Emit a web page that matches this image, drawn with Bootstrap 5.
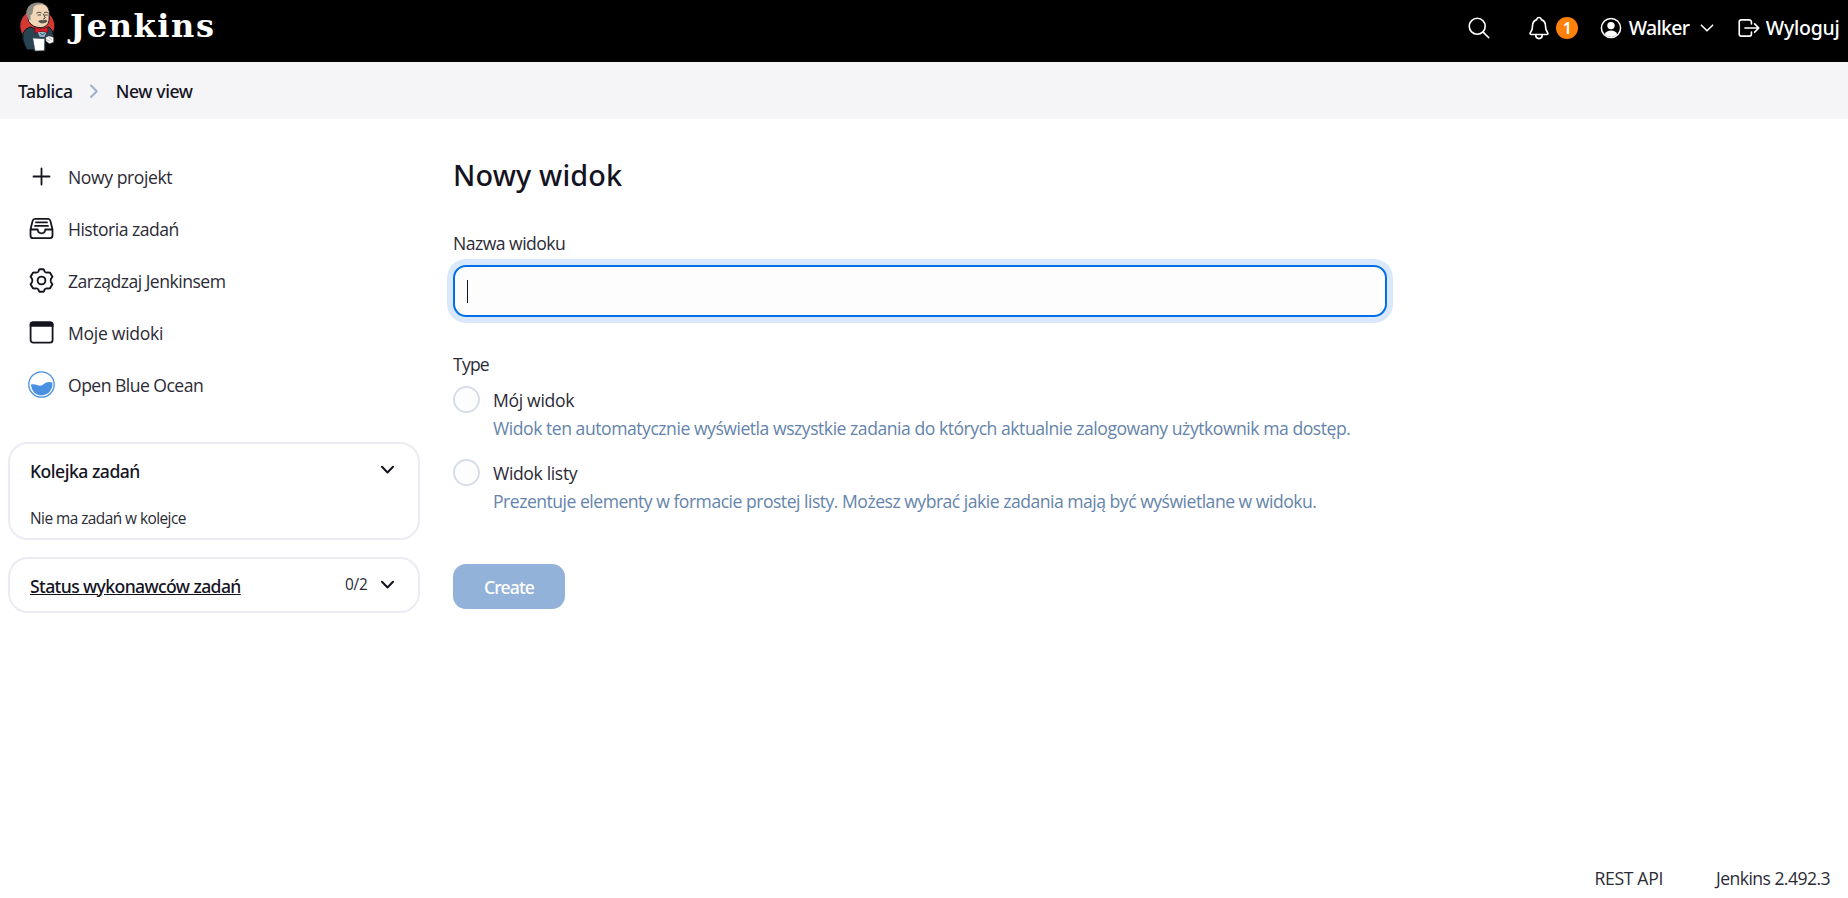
<!DOCTYPE html>
<html lang="pl">
<head>
<meta charset="utf-8">
<meta name="viewport" content="width=device-width, initial-scale=1">
<title>New view - Jenkins</title>
<link rel="stylesheet" href="https://cdn.jsdelivr.net/npm/bootstrap@5.3.0/dist/css/bootstrap.min.css">
<style>
body{font-family:"Open Sans","Noto Sans",sans-serif;font-size:17.6px;line-height:26px;color:#14141f;background:#fff;height:898px;overflow:hidden;letter-spacing:-.5px}
a{color:inherit;text-decoration:none}
svg{display:block;flex:none}
.side-item span,.pane small,.content label,.type-label,footer a{color:#2b2b36}
.ln{fill:none;stroke:currentColor;stroke-linecap:round;stroke-linejoin:round}
.topbar{height:62px;background:#000;color:#fff;padding:0 8.5px 7px 10px}
.topbar .nav-text{font:500 19.5px/28px "Noto Sans",sans-serif;padding-top:1px}
.mascot{margin-bottom:-7px}
.wordmark{font:700 32px/40px "DejaVu Serif",serif;letter-spacing:1.6px;margin-top:-3px}
.alert-count{width:22px;height:22px;background:#ff800a;font:600 16px/22px "Noto Sans",sans-serif;margin-left:4.5px;letter-spacing:0}
.bell{margin-left:34px}
.user-icon{margin:0 6.5px 0 22px}
.exit-icon{margin-left:10.5px}
.crumbs{height:57px;background:#f5f5f8;padding-left:18px;font-family:"Noto Sans",sans-serif;font-weight:500}
.crumb-sep{margin:0 15.5px;color:#9bb1cc}
.sidebar{width:411.5px;margin-left:8px;padding-top:31.5px}
.side-item{height:52px;padding-left:20px}
.side-icon{width:27px;margin-right:13px}
.pane{border:2px solid #ebebf3;border-radius:20px;padding:0 23.5px 0 20px}
.pane-title{font:500 17.6px/26px "Noto Sans",sans-serif;padding-top:1px}
.pane small{font-size:15.4px}
.queue{height:98px;margin-top:31.5px}
.queue-head{height:52px}
.queue small{margin-top:9.5px}
.executors{height:56px;margin-top:17px}
.executors svg{margin-left:13.5px}
.content{margin-left:33.5px;padding-top:38px;width:934px}
h1{font:500 28.8px/36px "Noto Sans",sans-serif;letter-spacing:.15px}
.name-label{margin-top:37px}
.name-field{height:52px;border:2px solid #006fe6;border-radius:13px;background:#fdfdfd;box-shadow:0 0 0 6px #d9e9fb;padding-left:12px;margin-top:9px}
.caret{width:1px;height:23px;background:#14141f;margin-top:1px}
.type-label{margin:34px 0 9px}
.choice{height:73px}
.choice label{margin-top:1px}
.choice .form-check-input{width:27px;height:27px;margin:.4px 13px 0 0;border:2px solid #d7dde8;background:#fdfdfd;float:none;flex:none}
.choice .form-text{margin:2px 0 0;font-size:17.6px;line-height:26px;color:#6484ab;white-space:nowrap}
.btn-create{width:112px;height:45px;border:0;border-radius:13px;font:500 17.6px/26px "Noto Sans",sans-serif;margin-top:32px;padding:0}
.btn-create:disabled{background:#92b2d9;color:#fff;opacity:1}
footer{height:38px;padding-right:18px;gap:53px;margin-bottom:1px}
.t1{letter-spacing:-.42px}.t2{letter-spacing:-.4px}.t3{letter-spacing:-.7px}.t4{letter-spacing:-.25px}
.s1{letter-spacing:-.43px}.s2{letter-spacing:-.52px}.s4{letter-spacing:-.3px}.s5{letter-spacing:-.54px}
.p1{letter-spacing:-.5px}.p2{letter-spacing:-.62px}.p3{letter-spacing:-.25px}
.f1{letter-spacing:-.53px}.f2{letter-spacing:-.8px}.f3{letter-spacing:-.33px}.f4{letter-spacing:-.36px}
.f5{letter-spacing:-.475px}.f6{letter-spacing:-.505px}.f7{letter-spacing:-.85px}.f8{letter-spacing:-.32px}.f9{letter-spacing:-.56px}
</style>
</head>
<body class="d-flex flex-column">
<header class="topbar d-flex align-items-center justify-content-between">
  <a href="#" class="d-flex align-items-center">
    <svg class="mascot" width="60" height="62" viewBox="0 0 180 186">
      <ellipse cx="82" cy="78" rx="51" ry="50" fill="#d33833"/>
      <path d="M39 100q5-14 22-19l30 12 24-12q12 4 15 24l1 20-15 4-8-12-3 34-54-2-8-16q-7-18-4-33z" fill="#2a4353" stroke="#0b1418" stroke-width="3"/>
      <path d="M52 46Q49 14 80 9q34-2 38 26l-1 27q-4 19-24 21-26 0-37-19z" fill="#f0d6b7" stroke="#222" stroke-width="3"/>
      <path d="M49 44Q47 17 72 9q18-4 33 4-25-2-34 7l-4 22-6 4 1 14-8-2z" fill="#8d8b84"/>
      <path d="M80 39q6-5 13-1m10 0q6-4 11 0M84 45h8m12 0h8m-12-3 6 12-6 3" class="ln" style="color:#55493d" stroke-width="3"/>
      <path d="M84 64q9-6 15-3 8-4 14 2-6 8-14 7-8 2-15-6z" fill="#595650"/>
      <path d="M75 81l14 7 4-4 4 3 16-6 1 17-17-4-6 1-16 5z" fill="#e01b24" stroke="#5a1015" stroke-width="2"/>
      <path d="M83 97l16-2 10 3-6 13-14-1z" fill="#9bb5c7"/>
      <path d="M91 99l5 6 8-5" fill="none" stroke="#31556b" stroke-width="3"/>
      <path d="M68 114l36 2-1 36-28 1z" fill="#fff" stroke="#36434a" stroke-width="2"/>
      <path d="M107 112l10-5 14 5v15l-13 4-10-7z" fill="#fff" stroke="#333" stroke-width="2"/>
      <path d="M116 112l9 7m-14 0 8 4" fill="none" stroke="#777" stroke-width="2"/>
    </svg>
    <span class="wordmark">Jenkins</span>
  </a>
  <nav class="d-flex align-items-center">
    <svg class="ln" width="26" height="26" viewBox="0 0 512 512" stroke-width="32"><path d="M221.09 64a157.09 157.09 0 10157.09 157.09A157.1 157.1 0 00221.09 64zM338.29 338.29L448 448"/></svg>
    <svg class="ln bell" width="26" height="26" viewBox="0 0 512 512" stroke-width="32"><path d="M427.68 351.43C402 320 383.87 304 383.87 217.35 383.87 138 343.35 109.73 310 96c-4.43-1.82-8.6-6-9.95-10.55C294.2 65.54 277.8 48 256 48s-38.21 17.55-44 37.47c-1.35 4.6-5.52 8.71-9.95 10.53-33.39 13.75-73.87 41.92-73.87 121.35C128.13 304 110 320 84.32 351.43 73.68 364.45 83 384 101.61 384h308.88c18.51 0 27.77-19.61 17.19-32.57zM320 384v16a64 64 0 01-128 0v-16"/></svg>
    <span class="alert-count rounded-circle text-center">1</span>
    <svg class="user-icon" width="22" height="22" viewBox="0 0 22 22"><circle cx="11" cy="11" r="9.600" fill="none" stroke="#fff" stroke-width="1.500"/><circle cx="11" cy="8.600" r="3.700" fill="#fff"/><path d="M4.700 17.200q1.700-3.700 6.300-3.700t6.300 3.700Q15 20 11 20t-6.300-2.800z" fill="#fff"/></svg>
    <span class="nav-text t3">Walker</span>
    <svg class="ln mx-2" width="20" height="20" viewBox="0 0 512 512" stroke-width="40"><path d="M112 184l144 144 144-144"/></svg>
    <svg class="ln exit-icon" width="26" height="26" viewBox="0 0 512 512" stroke-width="32"><path d="M304 336v40a40 40 0 01-40 40H104a40 40 0 01-40-40V136a40 40 0 0140-40h152c22.09 0 48 17.91 48 40v40M368 336l80-80-80-80M176 256h256"/></svg>
    <span class="nav-text t4 ms-1">Wyloguj</span>
  </nav>
</header>

<div class="crumbs d-flex align-items-center">
  <a href="#" class="t1">Tablica</a>
  <svg class="ln crumb-sep" width="12" height="16" viewBox="0 0 12 16" stroke-width="2"><path d="M3 2.500L8.800 8.200 3 14"/></svg>
  <a href="#" class="t2">New view</a>
</div>

<div class="d-flex flex-grow-1">
  <aside class="sidebar">
    <a href="#" class="side-item d-flex align-items-center">
      <svg class="side-icon ln" height="27" viewBox="0 0 27 27" stroke-width="1.800"><path d="M13.500 5.500v16M5.500 13.500h16"/></svg><span class="s1">Nowy projekt</span></a>
    <a href="#" class="side-item d-flex align-items-center">
      <svg class="side-icon ln" height="27" viewBox="0 0 27 27" stroke-width="1.800"><path d="M2.500 14.500L4.600 5.900Q5.100 3.900 7 3.900h13q1.900 0 2.400 2l2.100 8.600v6.100q0 2.600-2.600 2.600H5.100q-2.600 0-2.600-2.600zM2.500 14.500h7.200q.4 3.800 3.800 3.800t3.800-3.800h7.200M8 7.400h11M7 10.900h13"/></svg><span class="s2">Historia zadań</span></a>
    <a href="#" class="side-item d-flex align-items-center">
      <svg class="side-icon ln" height="27" viewBox="-13.500 -13.500 27 27" stroke-width="1.900"><path d="M-2-11.300H2Q2.500-11.300 3-9.200Q3.800-7.600 6.120-8L8.530-7.830L10.930-3.770L9.520-1.800Q8.600 0 9.520 1.800L10.930 3.770L8.530 7.830L6.120 8Q3.800 7.600 3 9.200Q2.500 11.300 2 11.300H-2Q-2.500 11.300-3 9.200Q-3.800 7.600-6.120 8L-8.530 7.830L-10.930 3.770L-9.520 1.800Q-8.600 0-9.520-1.800L-10.930-3.770L-8.530-7.830L-6.120-8Q-3.800-7.600-3-9.200Q-2.500-11.300-2-11.300z"/><circle r="3.900"/></svg><span class="s2">Zarządzaj Jenkinsem</span></a>
    <a href="#" class="side-item d-flex align-items-center">
      <svg class="side-icon" height="27" viewBox="0 0 27 27"><rect x="2.600" y="3.400" width="22" height="20.200" rx="2.600" class="ln" stroke-width="1.800"/><path d="M1.700 7.800V5.500q0-3 3-3h17.800q3 0 3 3v2.300z" fill="currentColor"/></svg><span class="s4">Moje widoki</span></a>
    <a href="#" class="side-item d-flex align-items-center">
      <svg class="side-icon" height="27" viewBox="0 0 27 27"><circle cx="13.500" cy="13.500" r="12.700" fill="none" stroke="#4a90e2" stroke-width="1.300"/><path d="M2.800 13.600q3.400-.8 7 .7 3 1.100 5.300-.9 4.200-3.400 9.200-1.800a11 11 0 0 1-10.800 12.800Q4.200 24.200 2.800 13.600z" fill="#4a90e2"/></svg><span class="s5">Open Blue Ocean</span></a>

    <section class="pane queue">
      <div class="queue-head d-flex align-items-center justify-content-between">
        <span class="pane-title p1">Kolejka zadań</span>
        <svg class="ln" width="13" height="10" viewBox="0 0 13 10" stroke-width="2"><path d="M1 1.800l5.500 5.700L12 1.800"/></svg>
      </div>
      <small class="d-block s5">Nie ma zadań w kolejce</small>
    </section>
    <section class="pane executors d-flex align-items-center justify-content-between">
      <a href="#" class="pane-title p2 text-decoration-underline">Status wykonawców zadań</a>
      <span class="d-flex align-items-center"><small class="p3">0/2</small>
      <svg class="ln" width="13" height="10" viewBox="0 0 13 10" stroke-width="2"><path d="M1 1.800l5.500 5.700L12 1.800"/></svg></span>
    </section>
  </aside>

  <main class="content">
    <h1 class="mb-0">Nowy widok</h1>
    <form>
      <label class="name-label d-block f1">Nazwa widoku</label>
      <div class="name-field d-flex align-items-center"><span class="caret"></span></div>
      <div class="type-label f2">Type</div>
      <div class="choice d-flex align-items-start"><input class="form-check-input" type="radio" name="mode" id="my"><div><label class="d-block f3" for="my">Mój widok</label><div class="form-text f5">Widok ten automatycznie wyświetla wszystkie zadania do których aktualnie zalogowany użytkownik ma dostęp.</div></div></div>
      <div class="choice d-flex align-items-start"><input class="form-check-input" type="radio" name="mode" id="list"><div><label class="d-block f4" for="list">Widok listy</label><div class="form-text f6">Prezentuje elementy w formacie prostej listy. Możesz wybrać jakie zadania mają być wyświetlane w widoku.</div></div></div>
      <button type="button" class="btn btn-create f7 d-block" disabled>Create</button>
    </form>
  </main>
</div>
<footer class="d-flex justify-content-end align-items-center"><a href="#" class="f8">REST API</a><a href="#" class="f9">Jenkins 2.492.3</a></footer>
<script src="https://cdn.jsdelivr.net/npm/bootstrap@5.3.0/dist/js/bootstrap.bundle.min.js"></script>
</body>
</html>
